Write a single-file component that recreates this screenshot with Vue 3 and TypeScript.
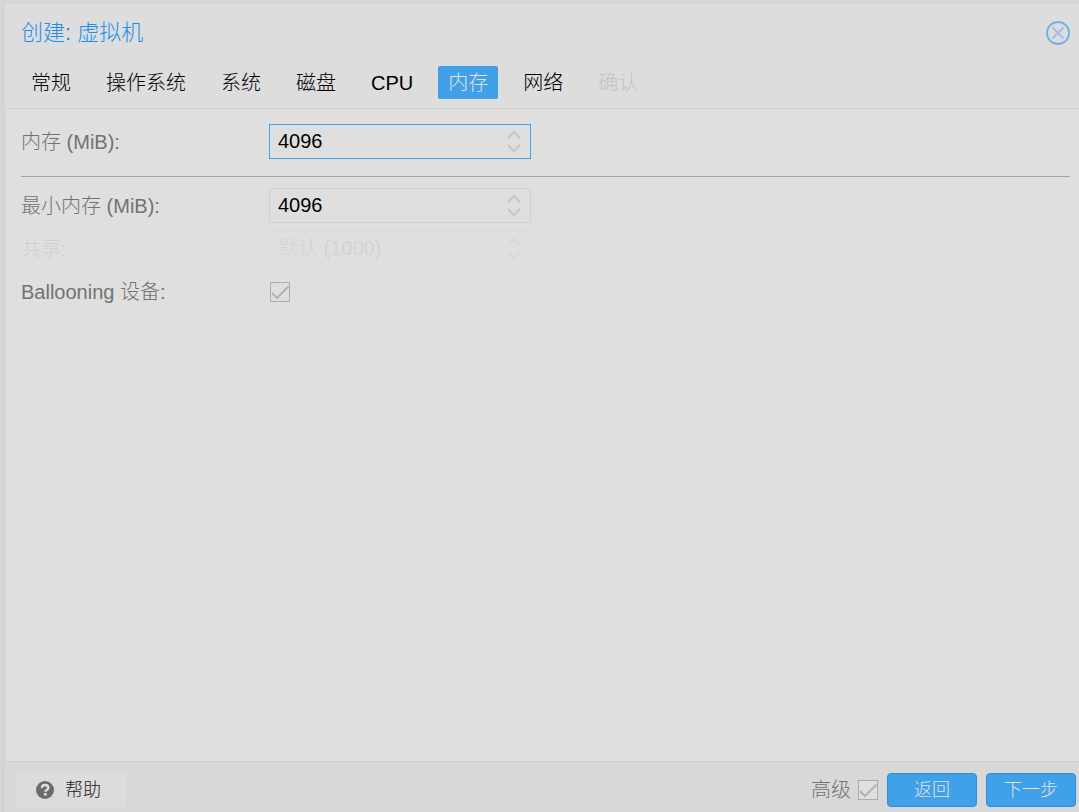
<script setup lang="ts">
import { ref } from 'vue'

interface Tab {
  id: string
  label: string
  disabled?: boolean
}

interface NumberField {
  id: string
  label: string
  value: string
  placeholder?: string
  focused?: boolean
  disabled?: boolean
}

const tabs: Tab[] = [
  { id: 'general', label: '常规' },
  { id: 'os', label: '操作系统' },
  { id: 'system', label: '系统' },
  { id: 'disks', label: '磁盘' },
  { id: 'cpu', label: 'CPU' },
  { id: 'memory', label: '内存' },
  { id: 'network', label: '网络' },
  { id: 'confirm', label: '确认', disabled: true },
]
const active = ref('memory')

const fields = ref<NumberField[]>([
  { id: 'memory', label: '内存 (MiB):', value: '4096', focused: true },
  { id: 'balloon', label: '最小内存 (MiB):', value: '4096' },
  { id: 'shares', label: '共享:', value: '', placeholder: '默认 (1000)', disabled: true },
])
const ballooning = ref(true)
const advanced = ref(true)

function step(field: NumberField, delta: number) {
  field.value = String(Math.max(0, (Number(field.value) || 0) + delta))
}
</script>

<template>
  <div class="backdrop">
    <main class="window">
      <header class="head">
        <div class="title-row">
          <h1 class="title">创建: 虚拟机</h1>
          <button class="close" type="button" aria-label="关闭">
            <svg viewBox="0 0 24 24" width="24" height="24" fill="none">
              <circle cx="12" cy="12" r="11" stroke="#6fb0e6" stroke-width="1.8" />
              <path d="M6.500 6.500 17.500 17.500M17.500 6.500 6.500 17.500" stroke="#9fbfe9" stroke-width="2" />
            </svg>
          </button>
        </div>
        <nav class="tabs" role="tablist">
          <button
            v-for="tab in tabs"
            :key="tab.id"
            class="tab"
            :class="{ active: tab.id === active }"
            type="button"
            role="tab"
            :aria-selected="tab.id === active"
            :disabled="tab.disabled"
            @click="active = tab.id"
          >{{ tab.label }}</button>
        </nav>
      </header>

      <section class="body">
        <template v-for="(field, index) in fields" :key="field.id">
          <div class="row" :class="{ disabled: field.disabled }">
            <label class="label" :for="field.id">{{ field.label }}</label>
            <div class="spinner" :class="{ focused: field.focused }">
              <input
                :id="field.id"
                v-model="field.value"
                class="number"
                type="text"
                inputmode="numeric"
                :placeholder="field.placeholder"
                :disabled="field.disabled"
              />
              <span class="arrows">
                <button class="arrow" type="button" aria-label="增加" :disabled="field.disabled" @click="step(field, 32)">
                  <svg viewBox="0 0 14 9" width="14" height="9"><path d="M1 8 7 2l6 6" /></svg>
                </button>
                <button class="arrow" type="button" aria-label="减少" :disabled="field.disabled" @click="step(field, -32)">
                  <svg viewBox="0 0 14 9" width="14" height="9"><path d="M1 1l6 6 6-6" /></svg>
                </button>
              </span>
            </div>
          </div>
          <hr v-if="index === 0" class="rule" />
        </template>
        <div class="row">
          <label class="label" for="ballooning">Ballooning 设备:</label>
          <span class="check">
            <input id="ballooning" v-model="ballooning" class="box" type="checkbox" />
            <svg v-if="ballooning" class="tick" viewBox="0 0 20 20"><path d="M2 11l5 5L18.500 4.500" /></svg>
          </span>
        </div>
      </section>

      <footer class="foot">
        <button class="help" type="button">
          <svg viewBox="0 0 18 18" width="18" height="18">
            <circle cx="9" cy="9" r="9" fill="#6b6b6b" />
            <path d="M5.800 6.800C6 4.800 7.300 4 9.100 4c1.800 0 3.200 1 3.200 2.700 0 2.200-3 2.200-3 4.100" fill="none" stroke="#dedede" stroke-width="2.400" />
            <rect x="8" y="12" width="2.600" height="2.600" fill="#dedede" />
          </svg>
          <span>帮助</span>
        </button>
        <div class="actions">
          <label class="advanced" for="advanced">高级</label>
          <span class="check">
            <input id="advanced" v-model="advanced" class="box" type="checkbox" />
            <svg v-if="advanced" class="tick" viewBox="0 0 20 20"><path d="M2 11l5 5L18.500 4.500" /></svg>
          </span>
          <button class="primary" type="button">返回</button>
          <button class="primary" type="button">下一步</button>
        </div>
      </footer>
    </main>
  </div>
</template>

<style>
body {
  margin: 0;
  background: #d8d8d8;
}
</style>

<style scoped>
.backdrop {
  box-sizing: border-box;
  display: flex;
  min-height: 100vh;
  padding: 4px 0 0 3px;
  background: #d6d6d6;
  font-family: "Liberation Sans", "Noto Sans CJK SC", sans-serif;
  font-size: 20px;
  font-weight: 300;
  line-height: 24px;
  color: #000;
}
.backdrop * {
  box-sizing: border-box;
}
button,
input {
  margin: 0;
  padding: 0;
  border: 0;
  background: none;
  font: inherit;
  color: inherit;
}
.window {
  flex: 1;
  min-width: 0;
  display: flex;
  flex-direction: column;
  border-left: 1px solid #cdcdcd;
  border-top-left-radius: 5px;
  background: #ddd;
}
.head {
  padding: 12px 9px 9px 17px;
}
.title-row {
  display: flex;
  align-items: center;
  justify-content: space-between;
  height: 34px;
}
.title {
  margin: 0;
  font-size: 22px;
  line-height: 32px;
  font-weight: 300;
  color: #1e8fe8;
}
.close {
  display: flex;
}
.tabs {
  display: flex;
  gap: 15px;
  margin-top: 16px;
}
.tab {
  height: 33px;
  padding: 0 10px;
  border-radius: 2px;
  white-space: nowrap;
}
.tab.active {
  background: #40a0e8;
  color: #e2e2e2;
}
.tab:disabled {
  color: #c3c3c3;
}
.body {
  flex: 1;
  margin-left: 1px;
  padding: 15px 9px 15px 15px;
  border: solid #d0d0d0;
  border-width: 1px 0 1px 1px;
  background: #dfdfdf;
}
.row {
  display: flex;
  align-items: center;
  height: 35px;
  margin-bottom: 8px;
}
.label {
  width: 248px;
  color: #727272;
}
.rule {
  height: 1px;
  margin: 17px 0 11px;
  border: 0;
  background: #a3a3a3;
}
.spinner {
  display: flex;
  align-items: center;
  width: 262px;
  height: 35px;
  border: 1px solid #d0d0d0;
}
.spinner.focused {
  border-color: #40a0e8;
}
.number {
  flex: 1;
  min-width: 0;
  height: 33px;
  padding: 0 8px;
  outline: 0;
}
.arrows {
  display: flex;
  flex-direction: column;
  gap: 5px;
  margin-right: 9px;
}
.arrow {
  display: flex;
}
.arrow path {
  fill: none;
  stroke: #c6c6c6;
  stroke-width: 2;
}
.disabled .label {
  color: #d0d0d0;
}
.disabled .spinner {
  border-color: #dadada;
}
.disabled .number::placeholder {
  color: #d3d3d3;
  opacity: 1;
}
.disabled .arrow path {
  stroke: #d8d8d8;
}
.check {
  position: relative;
  display: flex;
  width: 20px;
  height: 20px;
}
.row .check {
  margin-left: 1px;
}
.box {
  appearance: none;
  width: 20px;
  height: 20px;
  border: 1px solid #acacac;
  background: #dfdfdf;
}
.tick {
  position: absolute;
  inset: 0;
  pointer-events: none;
  fill: none;
  stroke: #b3b3b3;
  stroke-width: 2;
}
.foot {
  display: flex;
  align-items: center;
  justify-content: space-between;
  height: 50px;
  padding: 6px 3px 0 11px;
  background: #d8d8d8;
}
.help {
  display: flex;
  align-items: center;
  gap: 11px;
  height: 34px;
  padding: 0 25px 0 21px;
  border-radius: 3px;
  background: #dcdcdc;
  font-size: 18px;
  color: #222;
}
.actions {
  display: flex;
  align-items: center;
  gap: 9px;
}
.advanced {
  color: #727272;
}
.advanced + .check {
  margin-left: -2px;
}
.primary {
  width: 90px;
  height: 34px;
  border: 1px solid #2b8fe0;
  border-radius: 4px;
  background: #40a0e8;
  font-size: 18px;
  color: #e2e2e2;
}
</style>
